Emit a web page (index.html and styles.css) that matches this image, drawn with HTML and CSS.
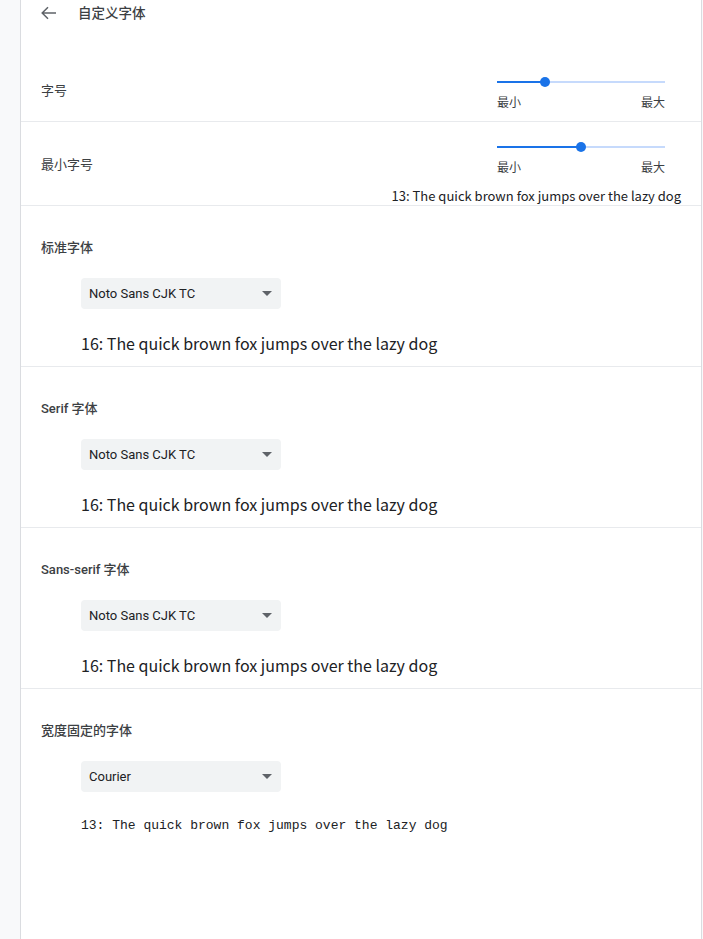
FILE: index.html
```html
<!DOCTYPE html>
<html lang="zh-CN">
<head>
<meta charset="utf-8">
<title>自定义字体</title>
<link rel="stylesheet" href="styles.css">
</head>
<body>
<div class="page">
  <main class="card">
    <div class="header">
      <div class="header-line">
        <svg class="back" width="16" height="16" viewBox="0 0 16 16" aria-hidden="true">
          <path d="M15 8H1.5M7 2.2L1.2 8l5.8 5.8" fill="none" stroke="#5f6368" stroke-width="1.5"/>
        </svg>
        <h1 class="title">自定义字体</h1>
      </div>
    </div>

    <div class="row">
      <div class="row-label">字号</div>
      <div class="right">
        <div class="slider">
          <div class="track-area">
            <div class="track">
              <div class="track-active" style="width:28.6%"></div>
              <div class="knob" style="left:28.6%"></div>
            </div>
          </div>
          <div class="slider-labels"><span>最小</span><span>最大</span></div>
        </div>
      </div>
    </div>

    <div class="row row-tall">
      <div class="row-label">最小字号</div>
      <div class="right">
        <div class="slider">
          <div class="track-area">
            <div class="track">
              <div class="track-active" style="width:50%"></div>
              <div class="knob" style="left:50%"></div>
            </div>
          </div>
          <div class="slider-labels"><span>最小</span><span>最大</span></div>
        </div>
        <div class="mini-sample">13: The quick brown fox jumps over the lazy dog</div>
      </div>
    </div>

    <section class="font-section">
      <h2 class="section-title">标准字体</h2>
      <div class="select"><span>Noto Sans CJK TC</span><i class="caret"></i></div>
      <p class="sample">16: The quick brown fox jumps over the lazy dog</p>
    </section>

    <section class="font-section">
      <h2 class="section-title">Serif 字体</h2>
      <div class="select"><span>Noto Sans CJK TC</span><i class="caret"></i></div>
      <p class="sample">16: The quick brown fox jumps over the lazy dog</p>
    </section>

    <section class="font-section">
      <h2 class="section-title">Sans-serif 字体</h2>
      <div class="select"><span>Noto Sans CJK TC</span><i class="caret"></i></div>
      <p class="sample">16: The quick brown fox jumps over the lazy dog</p>
    </section>

    <section class="font-section last">
      <h2 class="section-title">宽度固定的字体</h2>
      <div class="select"><span>Courier</span><i class="caret"></i></div>
      <p class="sample mono">13: The quick brown fox jumps over the lazy dog</p>
    </section>
  </main>
</div>
</body>
</html>
```

FILE: styles.css
```css
* { box-sizing: border-box; }

html, body {
  margin: 0;
  padding: 0;
  background: #f8f9fa;
  font-family: Roboto, "Noto Sans CJK SC", sans-serif;
  color: #202124;
}

.page {
  padding-left: 20px;
}

.card {
  width: 682px;
  min-height: 939px;
  background: #fff;
  border-left: 1px solid #dadce0;
  border-right: 1px solid #dadce0;
}

.header {
  height: 57px;
}

.header-line {
  display: flex;
  align-items: center;
  height: 26px;
  padding-left: 20px;
}

.back {
  display: block;
  flex: none;
}

.title {
  margin: 0 0 0 21px;
  font-size: 13.5px;
  font-weight: 500;
  color: #3c4043;
  line-height: 26px;
}

.row {
  display: flex;
  align-items: center;
  justify-content: space-between;
  padding: 0 20px;
  border-bottom: 1px solid #e8eaed;
}

.row-label {
  font-size: 13px;
  color: #3c4043;
}

.right {
  display: flex;
  flex-direction: column;
  align-items: flex-end;
  padding: 12px 0 10px;
}

.row-tall .right {
  padding-bottom: 0;
}

.slider {
  width: 200px;
}

.track-area {
  height: 26px;
  padding: 12px 16px 0;
}

.track {
  position: relative;
  height: 2px;
  background: #c6dafc;
}

.track-active {
  height: 2px;
  background: #1a73e8;
}

.knob {
  position: absolute;
  top: -4px;
  width: 10px;
  height: 10px;
  margin-left: -5px;
  border-radius: 50%;
  background: #1a73e8;
}

.slider-labels {
  display: flex;
  justify-content: space-between;
  padding: 0 16px;
  font-size: 12px;
  line-height: 16px;
  color: #3c4043;
}

.mini-sample {
  margin-top: 10px;
  font-family: "Noto Sans CJK TC", "Noto Sans CJK SC", sans-serif;
  font-size: 13px;
  line-height: 19px;
  color: #202124;
}

.font-section {
  height: 161px;
  padding: 33px 20px 0;
  border-bottom: 1px solid #e8eaed;
}

.font-section.last {
  border-bottom: none;
}

.section-title {
  margin: 0;
  font-size: 13px;
  line-height: 18px;
  font-weight: 500;
  color: #3c4043;
}

.select {
  display: flex;
  align-items: center;
  justify-content: space-between;
  width: 200px;
  height: 31px;
  margin: 21px 0 0 40px;
  padding: 0 9px 0 8px;
  background: #f1f3f4;
  border-radius: 4px;
  font-size: 13px;
  color: #202124;
}

.caret {
  display: block;
  width: 0;
  height: 0;
  border-left: 5px solid transparent;
  border-right: 5px solid transparent;
  border-top: 5px solid #5f6368;
}

.sample {
  margin: 23px 0 0 40px;
  font-family: "Noto Sans CJK TC", "Noto Sans CJK SC", sans-serif;
  font-size: 16px;
  line-height: 22px;
  color: #202124;
}

.sample.mono {
  font-family: "Liberation Mono", "Courier New", monospace;
  font-size: 13px;
  color: #202124;
}
```
